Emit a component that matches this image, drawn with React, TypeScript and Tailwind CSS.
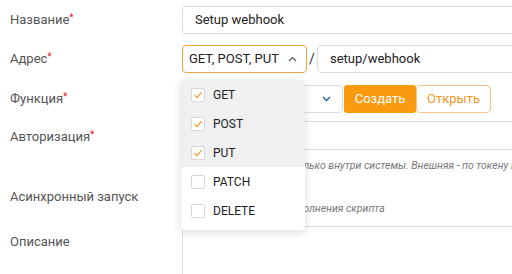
import React from 'react';

const methods = [
  { name: 'GET', checked: true },
  { name: 'POST', checked: true },
  { name: 'PUT', checked: true },
  { name: 'PATCH', checked: false },
  { name: 'DELETE', checked: false },
];

function Label({ text, required }: { text: string; required?: boolean }) {
  return (
    <div className="w-[172px] shrink-0 text-[13px] text-[#555]">
      {text}
      {required && <span className="text-[#e02020] text-[10px] align-top">*</span>}
    </div>
  );
}

function Check({ checked }: { checked: boolean }) {
  return (
    <span className="w-[14px] h-[14px] rounded-[2px] border border-[#d9d9d9] bg-white flex items-center justify-center">
      {checked && (
        <svg width="10" height="10" viewBox="0 0 10 10" fill="none">
          <path d="M1.5 5.2 L4 7.6 L8.6 2.2" stroke="#f7941d" strokeWidth="1.1" />
        </svg>
      )}
    </span>
  );
}

export default function App() {
  return (
    <div className="w-[512px] h-[274px] overflow-hidden bg-white font-['Roboto',sans-serif]">
      <div className="w-[620px] pl-[10px] pt-[6px] flex flex-col">
        {/* Название */}
        <div className="flex items-center h-[28px]">
          <Label text="Название" required />
          <div className="flex-1 h-[28px] border border-[#dcdcdc] rounded-[4px] px-3 flex items-center text-[13px] text-[#222]">
            Setup webhook
          </div>
        </div>

        {/* Адрес */}
        <div className="flex items-center h-[28px] mt-[11px]">
          <Label text="Адрес" required />
          <div className="relative">
            <div className="w-[125px] h-[28px] border border-[#f5a340] rounded-[4px] pl-[6px] pr-[9px] flex items-center justify-between text-[13px] text-[#222]">
              <span>GET, POST, PUT</span>
              <svg width="9" height="6" viewBox="0 0 9 6" fill="none">
                <path d="M1 5 L4.5 1.5 L8 5" stroke="#555" strokeWidth="1.2" />
              </svg>
            </div>
            <div className="absolute left-[-1px] top-[35px] z-10 w-[124px] bg-white rounded-[4px] shadow-[0_2px_8px_rgba(0,0,0,0.15)] pb-[5px] flex flex-col">
              {methods.map((m) => (
                <div
                  key={m.name}
                  className={`h-[29px] flex items-center gap-[8px] pl-[10px] text-[12px] text-[#222] ${m.checked ? 'bg-[#f0f0f0]' : 'bg-white'}`}
                >
                  <Check checked={m.checked} />
                  <span>{m.name}</span>
                </div>
              ))}
            </div>
          </div>
          <span className="w-[10px] text-center text-[14px] text-[#333]">/</span>
          <div className="flex-1 h-[28px] border border-[#dcdcdc] rounded-[4px] px-3 flex items-center text-[13px] text-[#222]">
            setup/webhook
          </div>
        </div>

        {/* Функция */}
        <div className="flex items-center h-[28px] mt-[12px]">
          <Label text="Функция" required />
          <div className="w-[161px] h-[28px] border border-[#dcdcdc] rounded-[4px] flex items-center justify-end pr-[11px]">
            <svg width="9" height="6" viewBox="0 0 9 6" fill="none">
              <path d="M1 1 L4.5 4.5 L8 1" stroke="#1d5fa8" strokeWidth="1.3" />
            </svg>
          </div>
          <button className="ml-[1px] w-[72px] h-[28px] rounded-[3px] bg-[#fa9a0e] text-white text-[13px]">
            Создать
          </button>
          <button className="w-[75px] h-[28px] rounded-[4px] border border-[#f9c48a] bg-white text-[#f7941d] text-[13px]">
            Открыть
          </button>
        </div>

        {/* Авторизация */}
        <div className="flex mt-[8px]">
          <div className="pt-[6px]">
            <Label text="Авторизация" required />
          </div>
          <div className="flex-1 flex flex-col">
            <div className="h-[29px] border border-[#dcdcdc] rounded-[4px]" />
            <div className="mt-[8px] text-[10.5px] leading-[16px] italic text-[#777] whitespace-nowrap">
              Внутренняя - доступен только внутри системы. Внешняя - по токену и ключу
            </div>
          </div>
        </div>

        {/* Асинхронный запуск */}
        <div className="flex mt-[9px]">
          <div className="pt-[4px]">
            <Label text="Асинхронный запуск" />
          </div>
          <div className="flex-1 flex flex-col">
            <div className="h-[16px] flex items-center">
              <Check checked={false} />
            </div>
            <div className="mt-[2px] text-[10.5px] leading-[16px] italic text-[#777] whitespace-nowrap">
              Не ждать окончания выполнения скрипта
            </div>
          </div>
        </div>

        {/* Описание */}
        <div className="flex mt-[9px]">
          <div className="pt-[6px]">
            <Label text="Описание" />
          </div>
          <div className="flex-1 h-[80px] border border-[#dcdcdc] rounded-[4px]" />
        </div>
      </div>
    </div>
  );
}
